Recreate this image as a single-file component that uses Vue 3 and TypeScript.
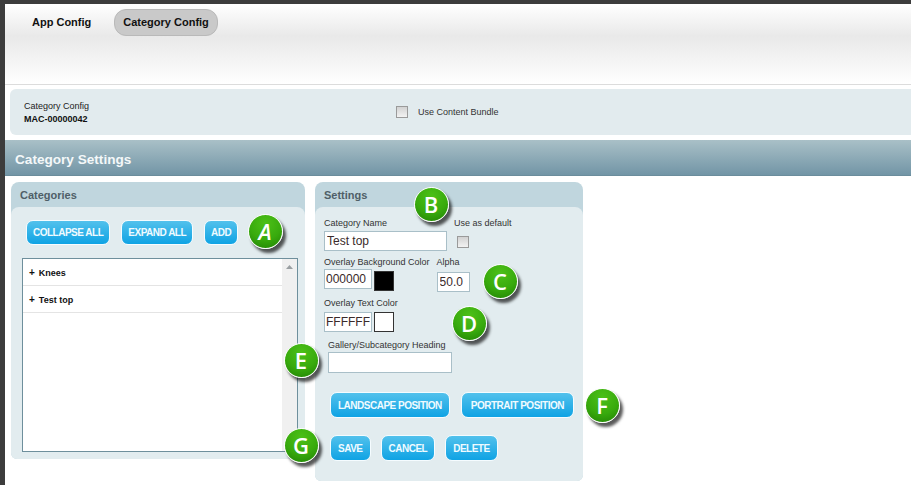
<template>
  <div class="page">
    <header class="top">
      <a class="tab">App Config</a>
      <a class="tab active">Category Config</a>
    </header>
    <div class="info-bar">
      <div class="info-id">
        <span>Category Config</span>
        <strong>MAC-00000042</strong>
      </div>
      <label class="bundle"><i class="check"></i>Use Content Bundle</label>
    </div>
    <h1 class="section-head">Category Settings</h1>
    <div class="panels">
      <section class="panel cats">
        <h2>Categories</h2>
        <div class="panel-body">
          <div class="btn-row">
            <button v-for="b in catButtons" :key="b" class="btn">{{ b }}</button>
          </div>
          <div class="tree">
            <ul>
              <li v-for="c in categories" :key="c"><b>+</b>{{ c }}</li>
            </ul>
            <div class="scroll"><svg width="7" height="4" viewBox="0 0 7 4"><path d="M3.5 0 7 4H0z" fill="#9a9fa2"/></svg></div>
          </div>
        </div>
      </section>
      <section class="panel settings">
        <h2>Settings</h2>
        <div class="panel-body">
          <div class="row name-row">
            <div class="field">
              <label>Category Name</label>
              <input class="wide" value="Test top" />
            </div>
            <div class="field default-field">
              <label>Use as default</label>
              <i class="check"></i>
            </div>
          </div>
          <div class="row bg-row">
            <div class="field">
              <label>Overlay Background Color</label>
              <div class="color"><input class="hex" value="000000" /><i class="swatch black"></i></div>
            </div>
            <div class="field alpha-field">
              <label>Alpha</label>
              <input class="alpha" value="50.0" />
            </div>
          </div>
          <div class="field text-field">
            <label>Overlay Text Color</label>
            <div class="color"><input class="hex dark" value="FFFFFF" /><i class="swatch"></i></div>
          </div>
          <div class="field heading-field">
            <label>Gallery/Subcategory Heading</label>
            <input class="heading" />
          </div>
          <div class="btn-row pos-row">
            <button class="btn tall">LANDSCAPE POSITION</button>
            <button class="btn tall">PORTRAIT POSITION</button>
          </div>
          <div class="btn-row save-row">
            <button class="btn tall">SAVE</button>
            <button class="btn tall">CANCEL</button>
            <button class="btn tall">DELETE</button>
          </div>
        </div>
      </section>
    </div>
    <span v-for="m in markers" :key="m.t" class="marker" :class="{ slant: m.t === 'A' }" :style="{ left: m.x + 'px', top: m.y + 'px' }">{{ m.t }}</span>
  </div>
</template>

<script setup lang="ts">
const catButtons = ['COLLAPSE ALL', 'EXPAND ALL', 'ADD']
const categories = ['Knees', 'Test top']
const markers = [
  { t: 'A', x: 265, y: 231 },
  { t: 'B', x: 431, y: 204 },
  { t: 'C', x: 500, y: 281 },
  { t: 'D', x: 469, y: 323 },
  { t: 'E', x: 301, y: 360 },
  { t: 'F', x: 602, y: 405 },
  { t: 'G', x: 301, y: 445 },
]
</script>

<style>
html, body { background: #fff; overflow: hidden; }
</style>

<style scoped>
.page { position: relative; width: 911px; height: 485px; box-sizing: border-box; border-top: 4px solid #3c3c3c; border-left: 5px solid #3c3c3c; font-family: "Liberation Sans", Arial, sans-serif; color: #222; overflow: hidden; }
.top { height: 81px; box-sizing: border-box; padding: 5px 0 0 27px; display: flex; align-items: flex-start; gap: 23px; background: linear-gradient(#fff 0, #e9e9e9 40%, #ececec 50%, #fff 100%); border-bottom: 1px solid #dcdcdc; }
.tab { padding: 0 8px; height: 25px; line-height: 25px; font-size: 11px; font-weight: bold; color: #111; border: 1px solid transparent; border-radius: 12px; }
.tab:first-child { padding: 0; border: 0; margin-top: 1px; }
.tab.active { background: #c9c9c9; border-color: #b9b9b9; }
.info-bar { margin: 4px 0 0 5px; height: 46px; background: #e2ebee; border-radius: 6px 0 0 6px; display: flex; align-items: center; padding-left: 14px; font-size: 9px; }
.info-id { display: flex; flex-direction: column; gap: 3px; width: 372px; }
.info-id strong { color: #111; }
.bundle { display: flex; align-items: center; gap: 10px; color: #333; }
.check { display: block; width: 10px; height: 10px; background: linear-gradient(#d2d2d2, #f2f2f2); border: 1px solid #9a9a9a; }
.section-head { margin: 5px 0 0; height: 36px; box-sizing: border-box; padding-left: 10px; font-size: 13.6px; line-height: 40px; font-weight: bold; color: #f4f8f9; background: linear-gradient(#a9c0c7, #7295a6); border-bottom: 1px solid #6b8d9c; }
.panels { display: flex; align-items: flex-start; gap: 10px; margin: 6px 0 0 6px; }
.panel { background: #c0d6de; border-radius: 8px 8px 6px 6px; }
.panel h2 { margin: 0; height: 25px; padding-left: 9px; font-size: 11px; line-height: 26px; font-weight: bold; color: #4f5f68; }
.panel-body { background: #e2ecef; border-radius: 8px 8px 6px 6px; }
.cats { width: 294px; }
.cats .panel-body { height: 252px; box-sizing: border-box; padding: 13px 7px 0 11px; }
.btn-row { display: flex; gap: 11px; margin-left: 4px; }
.btn { height: 25px; padding: 0 6px; font: bold 10px "Liberation Sans", Arial, sans-serif; letter-spacing: -0.5px; color: #f0fbff; background: linear-gradient(#52c1ec, #0fa3e4); border: 1px solid #f5fcff; border-radius: 7px; white-space: nowrap; }
.tree { display: flex; margin-top: 13px; width: 276px; height: 194px; box-sizing: border-box; border: 1px solid #6e8f9c; background: #fff; }
.tree ul { flex: 1; margin: 0; padding: 0; list-style: none; }
.tree li { height: 27px; box-sizing: border-box; padding-left: 6px; font-size: 9px; font-weight: bold; line-height: 28px; color: #111; border-bottom: 1px solid #e4e4e4; }
.tree li b { margin-right: 4px; font-size: 10px; }
.scroll { width: 15px; background: #f0f0f0; display: flex; justify-content: center; padding-top: 6px; box-sizing: border-box; }
.scroll svg { display: block; }
.settings { width: 268px; }
.settings .panel-body { height: 274px; box-sizing: border-box; padding: 11px 0 0 9px; }
.row { display: flex; }
.field { display: flex; flex-direction: column; align-items: flex-start; }
.field label { font-size: 9px; line-height: 11px; color: #333; white-space: nowrap; }
input { box-sizing: border-box; margin: 0; padding: 0 2px; font: 12px "Liberation Sans", Arial, sans-serif; color: #3a2a2a; background: #fff; border: 1px solid #a9bfc8; outline: none; }
.wide { width: 123px; height: 20px; margin-top: 2px; }
.default-field { margin-left: 7px; }
.default-field .check { margin: 7px 0 0 3px; }
.bg-row { margin-top: 6px; }
.color { display: flex; gap: 2px; margin-top: 1px; }
.hex { width: 48px; height: 20px; padding: 0 1px; }
.swatch { display: block; width: 18px; height: 18px; margin-top: 2px; background: #fff; border: 1px solid #333; }
.swatch.black { background: #000; }
.alpha-field { margin-left: 7px; }
.alpha { width: 33px; height: 20px; margin-top: 4px; }
.text-field { margin-top: 6px; }
.text-field .color { margin-top: 3px; }
.text-field .swatch { margin-top: 0; }
.heading-field { margin: 8px 0 0 4px; }
.heading { width: 124px; height: 21px; margin-top: 1px; }
.pos-row { margin: 19px 0 0 6px; }
.save-row { margin: 17px 0 0 6px; gap: 10px; }
.tall { height: 26px; padding: 0 7px; }
.pos-row .tall:last-child { padding: 0 9px; }
.marker { position: absolute; width: 33px; height: 33px; margin: -21.5px 0 0 -22.5px; border-radius: 50%; display: flex; align-items: center; justify-content: center; font: 600 22px "Open Sans", sans-serif; color: #fff; background: radial-gradient(circle at 50% 25%, #4cc018 0, #38aa0d 55%, #1f8004 100%); border: 1px solid #fff; box-shadow: 3px 4px 3px rgba(0, 0, 0, 0.65); }
.marker.slant { font-style: italic; }
</style>
